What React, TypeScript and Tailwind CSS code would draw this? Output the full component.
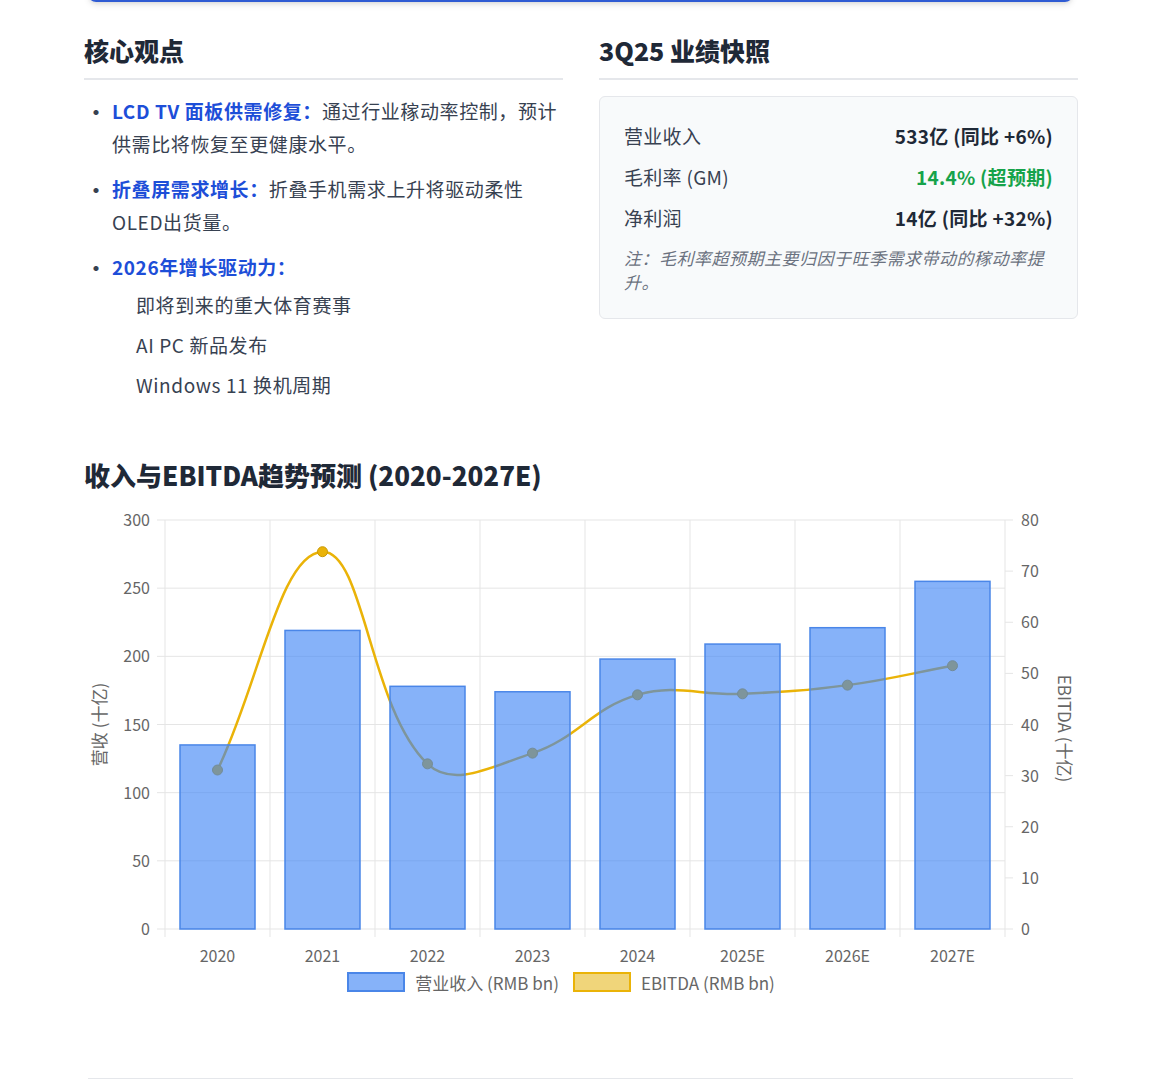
const FONT = { fontFamily: '"Noto Sans CJK SC", "Noto Sans", sans-serif' };

const YEARS = ["2020", "2021", "2022", "2023", "2024", "2025E", "2026E", "2027E"];
const REVENUE = [135, 219, 178, 174, 198, 209, 221, 255];
const EBITDA = [31.1, 73.8, 32.3, 34.4, 45.8, 46, 47.7, 51.5];

// chart geometry (svg coords)
const L = 85, R = 925, T = 24, B = 433;
const step = (R - L) / 8;
const yRev = (v: number) => B - (v / 300) * (B - T);
const yEb = (v: number) => B - (v / 80) * (B - T);

function splinePath(pts: { x: number; y: number }[], t = 0.4) {
  const cps = pts.map((p, i) => {
    const prev = pts[i - 1] || p;
    const next = pts[i + 1] || p;
    const d01 = Math.hypot(p.x - prev.x, p.y - prev.y);
    const d12 = Math.hypot(next.x - p.x, next.y - p.y);
    const s01 = d01 / (d01 + d12 || 1);
    const s12 = d12 / (d01 + d12 || 1);
    const fa = t * s01, fb = t * s12;
    return {
      c1: { x: p.x - fa * (next.x - prev.x), y: p.y - fa * (next.y - prev.y) },
      c2: { x: p.x + fb * (next.x - prev.x), y: p.y + fb * (next.y - prev.y) },
    };
  });
  let d = `M${pts[0].x},${pts[0].y}`;
  for (let i = 1; i < pts.length; i++) {
    const a = cps[i - 1].c2, b = cps[i].c1;
    d += ` C${a.x},${a.y} ${b.x},${b.y} ${pts[i].x},${pts[i].y}`;
  }
  return d;
}

function Chart() {
  const pts = EBITDA.map((v, i) => ({ x: L + step * (i + 0.5), y: yEb(v) }));
  return (
    <svg width="1000" height="478" viewBox="0 0 1000 478" style={FONT}>
      {[0, 50, 100, 150, 200, 250, 300].map((v) => (
        <g key={v}>
          <line x1={L - 8} x2={R} y1={yRev(v)} y2={yRev(v)} stroke="#e5e5e5" />
          <text x={L - 15} y={yRev(v) + 6} textAnchor="end" fontSize="16" fill="#666">{v}</text>
        </g>
      ))}
      {[0, 10, 20, 30, 40, 50, 60, 70, 80].map((v) => (
        <g key={v}>
          <line x1={R} x2={R + 8} y1={yEb(v)} y2={yEb(v)} stroke="#e5e5e5" />
          <text x={R + 16} y={yEb(v) + 6} fontSize="16" fill="#666">{v}</text>
        </g>
      ))}
      {Array.from({ length: 9 }).map((_, i) => (
        <line key={i} x1={L + step * i} x2={L + step * i} y1={T} y2={B + 8} stroke="#e5e5e5" />
      ))}
      {YEARS.map((y, i) => (
        <text key={y} x={L + step * (i + 0.5)} y={B + 33} textAnchor="middle" fontSize="16" fill="#666">{y}</text>
      ))}
      <text transform={`translate(26,${(T + B) / 2}) rotate(-90)`} textAnchor="middle" fontSize="17" fill="#666">营收 (十亿)</text>
      <text transform={`translate(978,${(T + B) / 2 + 4}) rotate(90)`} textAnchor="middle" fontSize="17" fill="#666">EBITDA (十亿)</text>
      <path d={splinePath(pts)} fill="none" stroke="#eab308" strokeWidth="2.5" />
      {pts.map((p, i) => (
        <circle key={i} cx={p.x} cy={p.y} r="5" fill="#eab308" stroke="#ca9a06" strokeWidth="1" />
      ))}
      {REVENUE.map((v, i) => (
        <rect key={i} x={L + step * i + 15} y={yRev(v)} width={step - 30} height={B - yRev(v)}
          fill="rgba(59,130,246,0.62)" stroke="#4a86e8" strokeWidth="1.5" />
      ))}
    </svg>
  );
}

export default function App() {
  return (
    <div className="relative w-[1161px] h-[1080px] bg-white overflow-hidden" style={FONT}>
      {/* top card edge */}
      <div className="absolute left-[88px] top-[-20px] w-[985px] h-[22px] rounded-b-lg border-b-[3px] border-[#2f5bd3] shadow-md" />

      <div className="pl-[84px] pr-[83px] pt-[32px]">
        <div className="grid grid-cols-2 gap-[36px]">
          {/* left */}
          <div>
            <h2 className="text-[25px] font-extrabold text-[#1f2937] pb-[8px] border-b-2 border-[#e5e7eb]">核心观点</h2>
            <ul className="mt-[14px] text-[19px] leading-[33px] text-[#374151] tracking-[0.6px]">
              <li className="flex">
                <span className="w-[28px] shrink-0 text-[24px] leading-[33px]">•</span>
                <span><b className="text-[#1d4ed8] font-bold">LCD TV 面板供需修复：</b>通过行业稼动率控制，预计供需比将恢复至更健康水平。</span>
              </li>
              <li className="flex mt-[12px]">
                <span className="w-[28px] shrink-0 text-[24px] leading-[33px]">•</span>
                <span><b className="text-[#1d4ed8] font-bold">折叠屏需求增长：</b>折叠手机需求上升将驱动柔性 OLED出货量。</span>
              </li>
              <li className="flex mt-[12px]">
                <span className="w-[28px] shrink-0 text-[24px] leading-[33px]">•</span>
                <span><b className="text-[#1d4ed8] font-bold">2026年增长驱动力：</b></span>
              </li>
              <li className="pl-[52px] mt-[2px] leading-[40px]">即将到来的重大体育赛事</li>
              <li className="pl-[52px] leading-[40px]">AI PC 新品发布</li>
              <li className="pl-[52px] leading-[40px]">Windows 11 换机周期</li>
            </ul>
          </div>
          {/* right */}
          <div>
            <h2 className="text-[25px] font-extrabold text-[#1f2937] pb-[8px] border-b-2 border-[#e5e7eb]">3Q25 业绩快照</h2>
            <div className="mt-[16px] bg-[#f8fafb] border border-[#e5e7eb] rounded-md px-[24px] pt-[18px] pb-[24px] text-[19px] text-[#374151] tracking-[0.3px]">
              <div className="flex justify-between leading-[41px]"><span>营业收入</span><b className="text-[#1f2937]">533亿 (同比 +6%)</b></div>
              <div className="flex justify-between leading-[41px]"><span>毛利率 (GM)</span><b className="text-[#16a34a]">14.4% (超预期)</b></div>
              <div className="flex justify-between leading-[41px]"><span>净利润</span><b className="text-[#1f2937]">14亿 (同比 +32%)</b></div>
              <p className="mt-[8px] text-[17px] leading-[24px] italic text-[#6b7280] tracking-[0.5px] pr-[8px]">注：毛利率超预期主要归因于旺季需求带动的稼动率提升。</p>
            </div>
          </div>
        </div>

        <h2 className="mt-[50px] text-[26px] font-extrabold text-[#1f2937]">收入与EBITDA趋势预测 (2020-2027E)</h2>
        <div className="mt-[2px] -ml-[4px]">
          <Chart />
        </div>
        <div className="flex justify-center gap-[14px] items-center text-[17px] text-[#666] -mt-[4px] mr-[40px]">
          <span className="flex items-center gap-[10px]">
            <span className="inline-block w-[58px] h-[20px] bg-[rgba(59,130,246,0.62)] border-2 border-[#4a86e8]" />营业收入 (RMB bn)
          </span>
          <span className="flex items-center gap-[10px]">
            <span className="inline-block w-[58px] h-[20px] bg-[#f0d57a] border-2 border-[#eab308]" />EBITDA (RMB bn)
          </span>
        </div>
      </div>
      <div className="absolute left-[88px] right-[88px] bottom-[1px] h-[1px] bg-[#e5e7eb]" />
    </div>
  );
}
